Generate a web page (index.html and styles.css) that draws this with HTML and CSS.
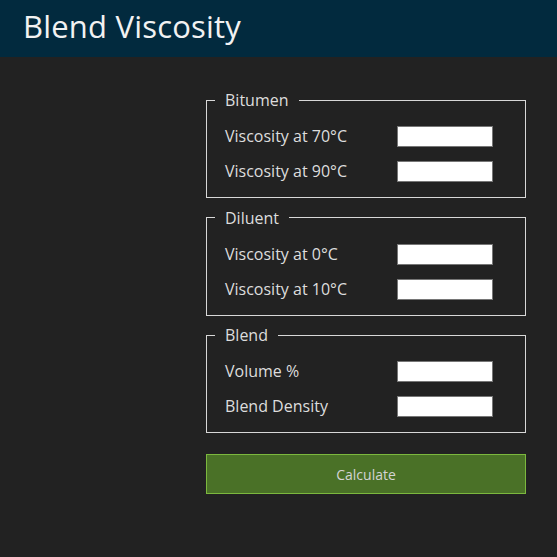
FILE: index.html
```html
<!DOCTYPE html>
<html lang="en">
<head>
    <meta charset="UTF-8">
    <meta name="viewport" content="width=device-width, initial-scale=1.0">
    <title>Blend Viscosity</title>
    <link rel="stylesheet" href="styles.css">
</head>
<body>
    <header>
        Blend Viscosity
    </header>
    <div class="container">
        <form id="blendForm">
            <fieldset>
                <legend>Bitumen</legend>
                <div class="row">
                    <label for="bit70">Viscosity at 70°C</label>
                    <input type="text" id="bit70">
                </div>
                <div class="row">
                    <label for="bit90">Viscosity at 90°C</label>
                    <input type="text" id="bit90">
                </div>
            </fieldset>

            <fieldset>
                <legend>Diluent</legend>
                <div class="row">
                    <label for="dil0">Viscosity at 0°C</label>
                    <input type="text" id="dil0">
                </div>
                <div class="row">
                    <label for="dil10">Viscosity at 10°C</label>
                    <input type="text" id="dil10">
                </div>
            </fieldset>

            <fieldset>
                <legend>Blend</legend>
                <div class="row">
                    <label for="volume">Volume %</label>
                    <input type="text" id="volume">
                </div>
                <div class="row">
                    <label for="density">Blend Density</label>
                    <input type="text" id="density">
                </div>
            </fieldset>

            <button type="button">Calculate</button>
        </form>
    </div>
</body>
</html>
```

FILE: styles.css
```css
body {
    font-family: "Open Sans", sans-serif;
    margin: 0;
    padding: 0;
    background-color: #222222;
    color: #dddddd;
}
header {
    background-color: #022a3e;
    color: #f2f2f2;
    height: 57px;
    line-height: 52px;
    padding: 0 23px;
    font-size: 31px;
    letter-spacing: 0.2px;
}
.container {
    display: flex;
    justify-content: flex-end;
    padding: 32px 31px 0 0;
}
form {
    width: 320px;
}
fieldset {
    border: 1px solid #d8d8d8;
    margin: 0 0 8.5px 0;
    padding: 15px 32px 15px 18px;
    display: flex;
    flex-direction: column;
    gap: 14px;
}
legend {
    font-size: 16px;
    line-height: 22px;
    padding: 0 10px;
    margin-left: -10px;
}
.row {
    display: flex;
    align-items: center;
    height: 21px;
}
label {
    width: 172px;
    font-size: 16px;
    line-height: 21px;
}
input {
    width: 96px;
    height: 21px;
    box-sizing: border-box;
    border: 1px solid #767676;
    background: #fff;
    padding: 0 4px;
    margin: 0;
}
button {
    display: block;
    width: 100%;
    height: 40px;
    margin-top: 21px;
    background: #4a7127;
    border: 1px solid #7cb83e;
    color: #d4d4d4;
    font-family: "Open Sans", sans-serif;
    font-size: 14px;
    cursor: pointer;
}
```
